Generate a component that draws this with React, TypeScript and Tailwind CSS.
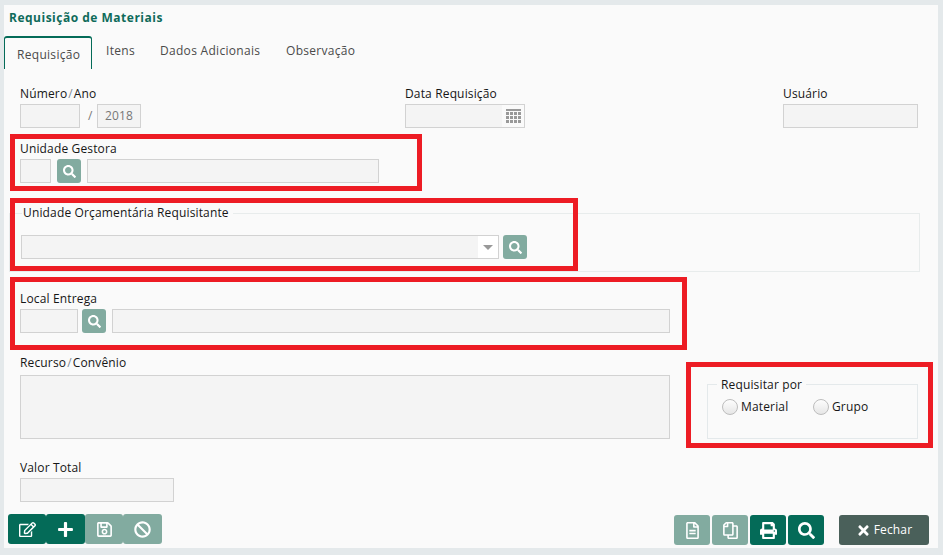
import React from "react";
import { FaRegEdit, FaPlus, FaRegSave, FaBan, FaRegFileAlt, FaRegCopy, FaPrint, FaSearch, FaTimes } from "react-icons/fa";

const inputCls = "h-6 border border-[#d2d2d2] bg-[#f4f4f4]";

function Label({ children, className = "" }: { children: React.ReactNode; className?: string }) {
  return <div className={"text-[12px] leading-4 text-[#161616] " + className}>{children}</div>;
}

function Slash() {
  return <span className="mx-[1px] text-[#7f8a94]">/</span>;
}

function SearchBtn() {
  return (
    <button className="w-6 h-6 rounded-[3px] bg-[#82aba0] text-white flex items-center justify-center">
      <FaSearch className="text-[13px]" />
    </button>
  );
}

function ActionBtn({ dark, icon, w = "w-[38px]" }: { dark?: boolean; icon: React.ReactNode; w?: string }) {
  return (
    <button className={"h-[30px] rounded-[3px] text-white flex items-center justify-center text-[17px] " + w + " " + (dark ? "bg-[#046b58]" : "bg-[#82aba0]")}>
      {icon}
    </button>
  );
}

function Radio({ label, className = "" }: { label: string; className?: string }) {
  return (
    <label className={"flex items-center gap-[3px] text-[12px] text-[#161616] " + className}>
      <span className="w-4 h-4 rounded-full border border-[#bdbdbd] bg-gradient-to-b from-[#fdfdfd] to-[#e6e6e6]" />
      {label}
    </label>
  );
}

function Box({ className }: { className: string }) {
  return <div className={"absolute border-[5px] border-[#ed1c24] pointer-events-none " + className} />;
}

export default function App() {
  return (
    <div className="relative w-[943px] h-[555px] overflow-hidden bg-[#e4e9eb] pt-[5px] pl-[4px] pr-[5px] pb-[7px] tracking-[0.15px]" style={{ fontFamily: '"Open Sans", sans-serif' }}>
      <div className="h-[543px] bg-[#fafafa] flex flex-col">
        <h1 className="pl-[5px] pt-[5px] text-[12px] leading-4 font-bold tracking-[0.5px] text-[#0f6b5a]">Requisição de Materiais</h1>

        <div className="flex mt-[10px] h-[33px] text-[12px] tracking-[0.3px] text-[#4a4a4a]">
          <div className="w-[88px] border-x border-t-2 border-x-[#046b58] border-t-[#046b58] rounded-t-[3px] pt-[8px] pl-[12px]">Requisição</div>
          <div className="w-[54px] ml-[14px] pt-[6px]">Itens</div>
          <div className="w-[126px] pt-[6px]">Dados Adicionais</div>
          <div className="pt-[6px]">Observação</div>
        </div>

        <div className="flex mt-[17px] pl-[16px]">
          <div className="w-[385px]">
            <Label>Número<Slash />Ano</Label>
            <div className="flex items-center mt-[2px]">
              <div className={inputCls + " w-[60px]"} />
              <span className="w-[17px] pl-[8px] text-[12px] text-[#777]">/</span>
              <div className={inputCls + " w-[44px] text-[12px] leading-[22px] text-center text-[#777]"}>2018</div>
            </div>
          </div>
          <div className="w-[378px]">
            <Label>Data Requisição</Label>
            <div className={inputCls + " w-[120px] mt-[2px] flex justify-end"}>
              <div className="w-[22px] bg-[#fafafa] flex items-center justify-center">
                <svg width="15" height="14" viewBox="0 0 15 14" fill="#999">
                  <rect width="15" height="2" />
                  <path d="M0 3h3v3H0zM4 3h3v3H4zM8 3h3v3H8zM12 3h3v3h-3zM0 7h3v3H0zM4 7h3v3H4zM8 7h3v3H8zM12 7h3v3h-3zM0 11h3v3H0zM4 11h3v3H4zM8 11h3v3H8zM12 11h3v3h-3z" />
                </svg>
              </div>
            </div>
          </div>
          <div>
            <Label>Usuário</Label>
            <div className={inputCls + " w-[135px] mt-[2px]"} />
          </div>
        </div>

        <div className="mt-[13px] pl-[16px]">
          <Label>Unidade Gestora</Label>
          <div className="flex gap-[6px] mt-[2px]">
            <div className={inputCls + " w-[31px]"} />
            <SearchBtn />
            <div className={inputCls + " w-[292px]"} />
          </div>
        </div>

        <fieldset className="relative mt-[30px] ml-[5px] w-[911px] h-[59px] border border-[#e8ecec]">
          <legend className="ml-[12px] px-[1px] pr-[4px] text-[12px] leading-4 text-[#161616] absolute -top-[9px] bg-[#fafafa]">Unidade Orçamentária Requisitante</legend>
          <div className="flex gap-[4px] pl-[11px] pt-[21px]">
            <div className={inputCls + " w-[478px] flex justify-end"}>
              <div className="w-[20px] bg-white flex items-center justify-center">
                <div className="w-0 h-0 border-x-[5px] border-x-transparent border-t-[5px] border-t-[#999]" />
              </div>
            </div>
            <SearchBtn />
          </div>
        </fieldset>

        <div className="mt-[19px] pl-[16px]">
          <Label>Local Entrega</Label>
          <div className="flex mt-[2px]">
            <div className={inputCls + " w-[58px]"} />
            <div className="ml-[4px]"><SearchBtn /></div>
            <div className={inputCls + " w-[558px] ml-[6px]"} />
          </div>
        </div>

        <div className="flex mt-[22px] pl-[16px]">
          <div className="w-[687px]">
            <Label>Recurso<Slash />Convênio</Label>
            <div className="w-[650px] h-[64px] mt-[4px] border border-[#d2d2d2] bg-[#f4f4f4]" />
          </div>
          <fieldset className="relative mt-[29px] w-[211px] h-[55px] border border-[#e4e9eb]">
            <legend className="absolute -top-[8px] left-[9px] px-[4px] bg-[#fafafa] text-[12px] leading-4 text-[#161616]">Requisitar por</legend>
            <div className="flex pt-[13px] pl-[14px]">
              <Radio label="Material" className="w-[91px]" />
              <Radio label="Grupo" />
            </div>
          </fieldset>
        </div>

        <div className="mt-[21px] pl-[16px]">
          <Label>Valor Total</Label>
          <div className={inputCls + " w-[154px] mt-[2px]"} />
        </div>

        <div className="flex mt-[12px] pl-[4px] pr-[9px]">
          <div className="flex">
            <ActionBtn dark icon={<FaRegEdit />} />
            <ActionBtn w="w-[39px]" dark icon={<FaPlus />} />
            <ActionBtn icon={<FaRegSave />} />
            <ActionBtn w="w-[39px]" icon={<FaBan />} />
          </div>
          <div className="flex gap-[2px] ml-auto mt-[1px]">
            <ActionBtn w="w-[36px]" icon={<FaRegFileAlt />} />
            <ActionBtn w="w-[36px]" icon={<FaRegCopy className="-scale-x-100" />} />
            <ActionBtn w="w-[36px]" dark icon={<FaPrint />} />
            <ActionBtn w="w-[36px]" dark icon={<FaSearch />} />
          </div>
          <button className="ml-[15px] mt-[1px] w-[90px] h-[30px] rounded-[3px] bg-[#4a605a] text-white text-[12px] flex items-center justify-center gap-[3px]">
            <FaTimes className="text-[15px]" /> Fechar
          </button>
        </div>
      </div>

      <Box className="left-[10px] top-[134px] w-[412px] h-[57px]" />
      <Box className="left-[10px] top-[198px] w-[568px] h-[73px]" />
      <Box className="left-[10px] top-[277px] w-[677px] h-[73px]" />
      <Box className="left-[686px] top-[362px] w-[247px] h-[86px]" />
    </div>
  );
}
